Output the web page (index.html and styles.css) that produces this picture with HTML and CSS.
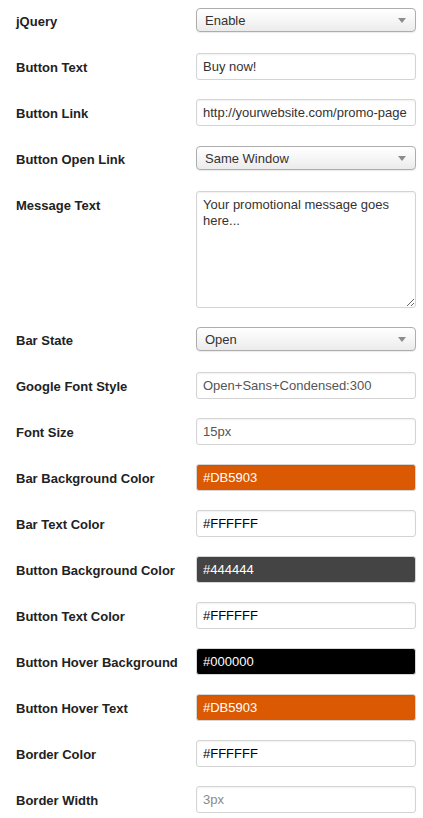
FILE: index.html
```html
<!DOCTYPE html>
<html>
<head>
<meta charset="utf-8">
<link rel="stylesheet" href="styles.css">
</head>
<body>
<form class="settings">
  <div class="row">
    <label class="label">jQuery</label>
    <div class="select-wrap"><select class="select"><option>Enable</option></select><span class="arrow"></span></div>
  </div>
  <div class="row">
    <label class="label">Button Text</label>
    <input class="field" type="text" value="Buy now!">
  </div>
  <div class="row">
    <label class="label">Button Link</label>
    <input class="field" type="text" value="http://yourwebsite.com/promo-page">
  </div>
  <div class="row">
    <label class="label">Button Open Link</label>
    <div class="select-wrap"><select class="select"><option>Same Window</option></select><span class="arrow"></span></div>
  </div>
  <div class="row row-tall">
    <label class="label">Message Text</label>
    <textarea class="area">Your promotional message goes here...</textarea>
  </div>
  <div class="row">
    <label class="label">Bar State</label>
    <div class="select-wrap"><select class="select"><option>Open</option></select><span class="arrow"></span></div>
  </div>
  <div class="row">
    <label class="label">Google Font Style</label>
    <input class="field field-muted" type="text" value="Open+Sans+Condensed:300">
  </div>
  <div class="row">
    <label class="label">Font Size</label>
    <input class="field field-muted" type="text" value="15px">
  </div>
  <div class="row">
    <label class="label">Bar Background Color</label>
    <input class="field color color-orange" type="text" value="#DB5903">
  </div>
  <div class="row">
    <label class="label">Bar Text Color</label>
    <input class="field color color-white" type="text" value="#FFFFFF">
  </div>
  <div class="row">
    <label class="label">Button Background Color</label>
    <input class="field color color-dark" type="text" value="#444444">
  </div>
  <div class="row">
    <label class="label">Button Text Color</label>
    <input class="field color color-white" type="text" value="#FFFFFF">
  </div>
  <div class="row">
    <label class="label">Button Hover Background</label>
    <input class="field color color-black" type="text" value="#000000">
  </div>
  <div class="row">
    <label class="label">Button Hover Text</label>
    <input class="field color color-orange" type="text" value="#DB5903">
  </div>
  <div class="row">
    <label class="label">Border Color</label>
    <input class="field color color-white" type="text" value="#FFFFFF">
  </div>
  <div class="row">
    <label class="label">Border Width</label>
    <input class="field field-light" type="text" value="3px">
  </div>
</form>
</body>
</html>
```

FILE: styles.css
```css
html, body {
  margin: 0;
  padding: 0;
  background: #ffffff;
}

body {
  font-family: "Liberation Sans", Arial, sans-serif;
  font-size: 13px;
  color: #333;
}

.settings {
  display: flex;
  flex-direction: column;
  padding-left: 16px;
}

.row {
  display: flex;
  align-items: flex-start;
  height: 46px;
  padding-top: 7px;
  box-sizing: border-box;
}

.row-tall {
  height: 135px;
}

.label {
  width: 180px;
  flex: none;
  padding-top: 1px;
  font-weight: bold;
  font-size: 13px;
  line-height: 27px;
  color: #222;
}

.field {
  width: 220px;
  height: 27px;
  box-sizing: border-box;
  margin: 0;
  padding: 0 6px;
  border: 1px solid #d4d4d4;
  border-radius: 3px;
  box-shadow: inset 0 1px 2px rgba(0, 0, 0, 0.06);
  background: #fff;
  font-family: "Liberation Sans", Arial, sans-serif;
  font-size: 13px;
  color: #333;
  outline: none;
}

.field-muted {
  color: #555;
}

.field-light {
  color: #8a8a8a;
}

.color {
  color: #000;
}

.color-white {
  background: #fff;
  color: #000;
}

.color-orange {
  background: #db5903;
  border-color: #d6d6d6;
  color: #fff;
}

.color-dark {
  background: #444444;
  border-color: #d6d6d6;
  color: #fff;
}

.color-black {
  background: #000000;
  border-color: #d6d6d6;
  color: #fff;
}

.select-wrap {
  position: relative;
  width: 220px;
  height: 24px;
  margin-top: 1px;
}

.select {
  appearance: none;
  -webkit-appearance: none;
  display: block;
  width: 100%;
  height: 24px;
  box-sizing: border-box;
  margin: 0;
  padding: 0 20px 0 8px;
  border: 1px solid #adadad;
  border-radius: 4px;
  background: linear-gradient(#ffffff, #f6f6f6 50%, #ebebeb);
  box-shadow: 0 1px 1px rgba(0, 0, 0, 0.08);
  font-family: "Liberation Sans", Arial, sans-serif;
  font-size: 13px;
  color: #333;
  outline: none;
}

.arrow {
  position: absolute;
  right: 10px;
  top: 10px;
  width: 0;
  height: 0;
  border-left: 4px solid transparent;
  border-right: 4px solid transparent;
  border-top: 5px solid #8c8c8c;
  pointer-events: none;
}

.area {
  width: 220px;
  height: 117px;
  box-sizing: border-box;
  margin: 0;
  padding: 5px 6px;
  border: 1px solid #d4d4d4;
  border-radius: 3px;
  box-shadow: inset 0 1px 2px rgba(0, 0, 0, 0.06);
  font-family: "Liberation Sans", Arial, sans-serif;
  font-size: 13px;
  line-height: 16px;
  color: #333;
  outline: none;
}
```
